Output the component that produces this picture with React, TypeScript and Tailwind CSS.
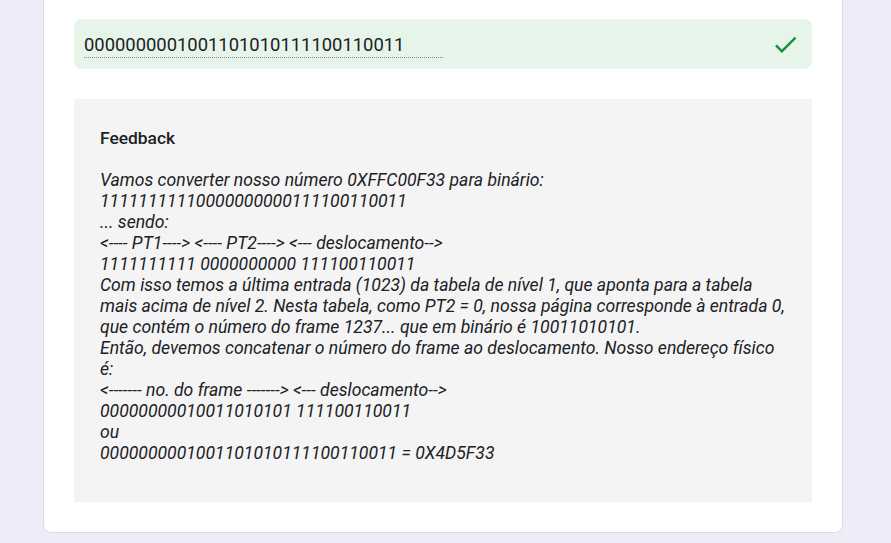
import React from 'react';

const answer = '0000000001001101010111100110011';

const feedbackLines = [
  'Vamos converter nosso número 0XFFC00F33 para binário:',
  '11111111110000000000111100110011',
  '... sendo:',
  '<---- PT1----> <---- PT2----> <--- deslocamento-->',
  '1111111111 0000000000 111100110011',
  'Com isso temos a última entrada (1023) da tabela de nível 1, que aponta para a tabela mais acima de nível 2. Nesta tabela, como PT2 = 0, nossa página corresponde à entrada 0, que contém o número do frame 1237... que em binário é 10011010101.',
  'Então, devemos concatenar o número do frame ao deslocamento. Nosso endereço físico é:',
  '<------- no. do frame -------> <--- deslocamento-->',
  '00000000010011010101 111100110011',
  'ou',
  '0000000001001101010111100110011 = 0X4D5F33',
];

const CheckIcon = () => (
  <svg viewBox="0 0 24 24" className="w-[29px] h-[29px]" fill="#1e8e3e">
    <path d="M9 16.17L4.83 12l-1.42 1.41L9 19 21 7l-1.41-1.41z" />
  </svg>
);

export default function App() {
  return (
    <div className="min-h-screen bg-[#f0ebf8] font-['Roboto',sans-serif] text-[#202124]">
      <div className="ml-[43px] w-[800px]">
        <div className="bg-white border-x border-b border-[#dadce0] rounded-b-lg px-[30px] pt-[19px] pb-[30px]">
          {/* resposta correta */}
          <div className="bg-[#e6f4ea] rounded-lg h-[50px] pl-[10px] pr-[12px] flex items-center justify-between">
            <div className="w-[359px] border-b border-dotted border-[#80868b] text-[18.4px] leading-[24px] pt-[2px] whitespace-nowrap">
              {answer}
            </div>
            <CheckIcon />
          </div>

          {/* feedback */}
          <div className="mt-[30px] bg-[#f4f4f4] px-[26px] pt-[27px] pb-[38px]">
            <div className="text-[17.4px] leading-[24px] font-medium">Feedback</div>
            <div className="mt-[20px] italic text-[17.6px] leading-[21px]">
              {feedbackLines.map((line, i) => (
                <div key={i}>{line}</div>
              ))}
            </div>
          </div>
        </div>
      </div>
    </div>
  );
}
